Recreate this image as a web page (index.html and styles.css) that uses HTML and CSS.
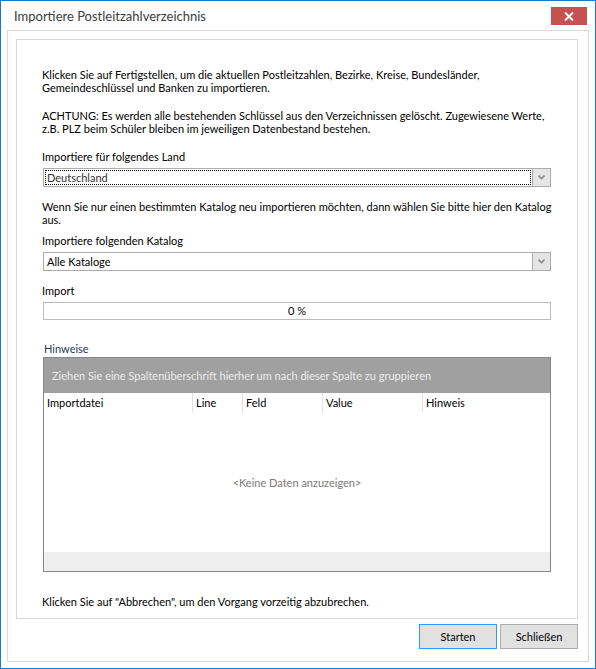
FILE: index.html
```html
<!DOCTYPE html>
<html>
<head>
  <meta name="viewport" content="width=device-width, initial-scale=1">
  <link rel="stylesheet" href="styles.css">
</head>
<body>
  <div class="window">
    <div class="titlebar">
      <span class="title">Importiere Postleitzahlverzeichnis</span>
      <div class="close">
        <svg width="10" height="9" viewBox="0 0 10 9"><path d="M1 0.5 L9 8.5 M9 0.5 L1 8.5" stroke="#fff" stroke-width="2"/></svg>
      </div>
    </div>
    <div class="frame">
      <div class="page">
        <p class="text first">Klicken Sie auf Fertigstellen, um die aktuellen Postleitzahlen, Bezirke, Kreise, Bundesländer,<br>Gemeindeschlüssel und Banken zu importieren.</p>
        <p class="text warn">ACHTUNG: Es werden alle bestehenden Schlüssel aus den Verzeichnissen gelöscht. Zugewiesene Werte,<br>z.B. PLZ beim Schüler bleiben im jeweiligen Datenbestand bestehen.</p>

        <label class="text label-land">Importiere für folgendes Land</label>
        <div class="combo">
          <div class="combo-value"><span class="focus">Deutschland</span></div>
          <div class="combo-btn">
            <svg width="7" height="5" viewBox="0 0 7 5"><path d="M0.5 0.5 L3.5 3.5 L6.5 0.5" fill="none" stroke="#8a8a8a" stroke-width="1.6"/></svg>
          </div>
        </div>

        <p class="text hint">Wenn Sie nur einen bestimmten Katalog neu importieren möchten, dann wählen Sie bitte hier den Katalog<br>aus.</p>

        <label class="text label-katalog">Importiere folgenden Katalog</label>
        <div class="combo">
          <div class="combo-value plain">Alle Kataloge</div>
          <div class="combo-btn">
            <svg width="7" height="5" viewBox="0 0 7 5"><path d="M0.5 0.5 L3.5 3.5 L6.5 0.5" fill="none" stroke="#8a8a8a" stroke-width="1.6"/></svg>
          </div>
        </div>

        <label class="text label-import">Import</label>
        <div class="progress">0 %</div>

        <label class="text label-hinweise">Hinweise</label>
        <div class="grid">
          <div class="group-panel">Ziehen Sie eine Spaltenüberschrift hierher um nach dieser Spalte zu gruppieren</div>
          <div class="grid-header">
            <div class="col col-datei">Importdatei</div>
            <div class="col col-line">Line</div>
            <div class="col col-feld">Feld</div>
            <div class="col col-value">Value</div>
            <div class="col col-hinweis">Hinweis</div>
          </div>
          <div class="grid-body">&lt;Keine Daten anzuzeigen&gt;</div>
          <div class="grid-footer"></div>
        </div>

        <p class="text cancel">Klicken Sie auf "Abbrechen", um den Vorgang vorzeitig abzubrechen.</p>
      </div>
      <div class="buttons">
        <button class="btn default">Starten</button>
        <button class="btn">Schließen</button>
      </div>
    </div>
  </div>
</body>
</html>
```

FILE: styles.css
```css
body {
  margin: 0;
  padding: 0;
  font-family: Lato, "Liberation Sans", sans-serif;
  font-size: 11px;
  color: #000;
  background: #fff;
}
.window {
  width: 596px;
  height: 669px;
  box-sizing: border-box;
  border: 1px solid #1979ca;
  display: flex;
  flex-direction: column;
}
.titlebar {
  height: 29px;
  display: flex;
  align-items: flex-start;
  justify-content: space-between;
}
.title {
  margin: 7px 0 0 13px;
  font-size: 13px;
  color: #3c3c3c;
}
.close {
  width: 36px;
  height: 18px;
  margin: 6px 8px 0 0;
  background: #c75050;
  display: flex;
  align-items: center;
  justify-content: center;
}
.frame {
  flex: 1;
  margin: 0 6px 6px 6px;
  border: 1px solid #d9d9d9;
  display: flex;
  flex-direction: column;
}
.page {
  flex: 1;
  margin: 8px 10px 0 8px;
  border: 1px solid #d9d9d9;
  padding: 0 26px 0 25px;
}
.text {
  display: block;
  margin: 0;
  line-height: 13px;
  white-space: nowrap;
}
.first { margin-top: 28px; }
.warn { margin-top: 15px; }
.label-land { margin-top: 15px; }
.hint { margin-top: 13px; }
.label-katalog { margin-top: 8px; }
.label-import { margin-top: 13px; }
.label-hinweise { margin-top: 22px; margin-left: 2px; color: #1e395b; }
.cancel { margin-top: 23px; }

.combo {
  margin: 5px 0 0 1px;
  height: 19px;
  box-sizing: border-box;
  border: 1px solid #acacac;
  display: flex;
}
.combo-value {
  flex: 1;
  padding: 1px;
  display: flex;
}
.combo-value .focus {
  flex: 1;
  border: 1px dotted #000;
  padding-left: 1px;
  line-height: 13px;
  color: #333;
}
.combo-value.plain {
  padding: 2px 0 0 3px;
  line-height: 13px;
}
.combo-btn {
  width: 17px;
  border-left: 1px solid #acacac;
  background: #e5e5e5;
  display: flex;
  align-items: center;
  justify-content: center;
}
.progress {
  margin: 5px 0 0 1px;
  height: 18px;
  box-sizing: border-box;
  border: 1px solid #bcbcbc;
  text-align: center;
  line-height: 16px;
}
.grid {
  margin: 2px 0 0 1px;
  height: 215px;
  box-sizing: border-box;
  border: 1px solid #828790;
  display: flex;
  flex-direction: column;
}
.group-panel {
  height: 35px;
  background: #a0a0a0;
  color: #ececec;
  padding-left: 8px;
  line-height: 35px;
}
.grid-header {
  height: 19px;
  display: flex;
}
.col {
  padding-left: 3px;
  line-height: 19px;
  border-left: 1px solid #e3e3e3;
}
.col-datei { width: 145px; border-left: none; }
.col-line { width: 46px; }
.col-feld { width: 76px; }
.col-value { width: 96px; }
.col-hinweis { flex: 1; }
.grid-body {
  flex: 1;
  display: flex;
  align-items: center;
  justify-content: center;
  color: #7a7a7a;
}
.grid-footer {
  height: 19px;
  background: #efefef;
}
.buttons {
  display: flex;
  justify-content: flex-end;
  gap: 3px;
  margin: 5px 10px 12px 0;
}
.btn {
  width: 78px;
  height: 25px;
  box-sizing: border-box;
  border: 1px solid #adadad;
  background: #e1e1e1;
  font-family: inherit;
  font-size: 11px;
  color: #000;
  padding: 0;
}
.btn.default {
  border-color: #3399ff;
}
```
